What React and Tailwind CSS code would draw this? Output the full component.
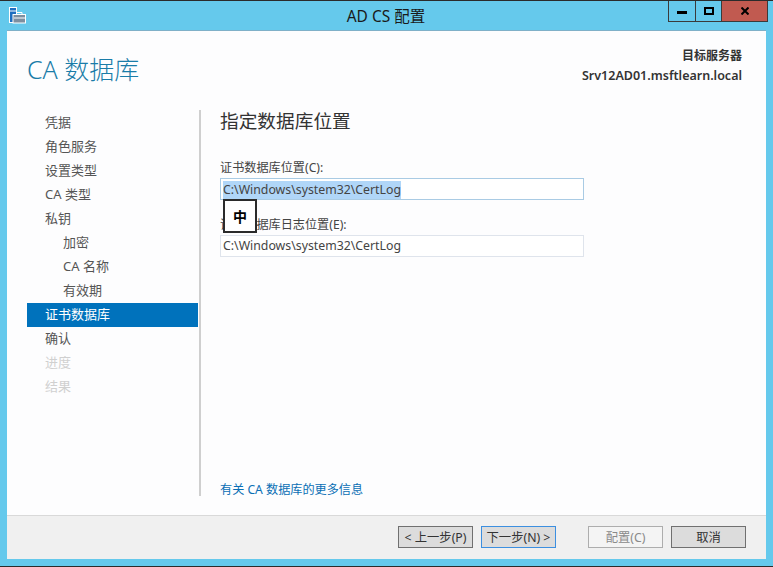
const F = "font-['Noto_Sans','Noto_Sans_CJK_SC',sans-serif]";

function Nav({ label, indent, active, disabled }) {
  return (
    <div
      className={`h-6 flex items-center text-[13px] ${indent ? "pl-[36px]" : "pl-[18px]"} ${
        active ? "bg-[#0072bc] text-white" : disabled ? "text-[#d0d0d0]" : "text-[#555555]"
      }`}
    >
      {label}
    </div>
  );
}

function Btn({ children, cls }) {
  return (
    <div className={`w-[75px] h-[22px] flex items-center justify-center text-[12.3px] pt-[2px] border ${cls}`}>{children}</div>
  );
}

export default function App() {
  return (
    <div className={`${F} relative w-[773px] h-[567px] bg-[#65c9ec] border-y border-[#2b2b2b] flex flex-col overflow-hidden`}>
      <div className="h-[30px] shrink-0 relative flex justify-center items-center">
        <svg className="absolute left-[9px] top-[6px]" width="17" height="17" viewBox="0 0 17 17">
          <rect x="0.5" y="0.5" width="7" height="15" fill="#1f6fc0" stroke="#fff" />
          <rect x="1" y="3.5" width="6" height="1" fill="#fff" />
          <rect x="4" y="7.5" width="12.5" height="8.5" fill="#7d8fa0" stroke="#fff" />
          <path d="M7.5 7.5V5.5H13V7.5" fill="none" stroke="#fff" />
          <rect x="5" y="10.5" width="11" height="1" fill="#fff" />
        </svg>
        <span className="text-[15.5px] text-[#1a1a1a] pt-[1px] pr-[1px]">AD CS 配置</span>
        <div className="absolute right-[5px] top-[-1px] h-[22px] flex border border-t-0 border-[#3a3a3a]">
          <div className="w-[27px] flex items-center justify-center border-r border-[#3a3a3a]">
            <div className="w-[10px] h-[3px] bg-black mt-[3px]" />
          </div>
          <div className="w-[26px] flex items-center justify-center border-r border-[#3a3a3a]">
            <div className="w-[10px] h-[8px] border-2 border-black" />
          </div>
          <div className="w-[45px] bg-[#c15a50] flex items-center justify-center">
            <svg width="8" height="8" viewBox="0 0 8 8">
              <path d="M0.5 0.5L7.5 7.5M7.5 0.5L0.5 7.5" stroke="#000" strokeWidth="2" />
            </svg>
          </div>
        </div>
      </div>

      <div className="mx-[7px] h-[528px] bg-[#fdfdfe] flex flex-col shadow-[0_-1px_0_#7fb0c8]">
        <div className="h-[79px] shrink-0 flex justify-between pl-[20px] pr-[24px]">
          <div className="text-[#1a7ca8] text-[25px] font-light pt-[20px] leading-[36px]">CA 数据库</div>
          <div className="text-right font-semibold text-[#333333] pt-[15px] leading-[20px]">
            <div className="text-[12px]">目标服务器</div>
            <div className="text-[12.5px]">Srv12AD01.msftlearn.local</div>
          </div>
        </div>

        <div className="flex-1 flex">
          <div className="w-[171px] ml-[20px] pt-[1px] shrink-0">
            <Nav label="凭据" />
            <Nav label="角色服务" />
            <Nav label="设置类型" />
            <Nav label="CA 类型" />
            <Nav label="私钥" />
            <Nav label="加密" indent />
            <Nav label="CA 名称" indent />
            <Nav label="有效期" indent />
            <Nav label="证书数据库" active />
            <Nav label="确认" />
            <Nav label="进度" disabled />
            <Nav label="结果" disabled />
          </div>
          <div className="w-[2px] ml-[1px] h-[386px] bg-[#cfcfcf]" />
          <div className="relative flex-1 pl-[19px] h-[386px] flex flex-col">
            <div className="text-[18.7px] leading-[24px] text-[#333333] mt-[-1px]">指定数据库位置</div>
            <div className="mt-[26px] text-[12.15px] leading-[18px] text-[#444444]">证书数据库位置(C):</div>
            <div className="mt-[1px] w-[364px] h-[22px] border border-[#a9cbe4] bg-white flex items-center px-[2px] pt-[1px] text-[12.3px] text-[#444444]">
              <span className="bg-[#b0d6f8] leading-[18px]">C:\Windows\system32\CertLog</span>
            </div>
            <div className="mt-[16px] text-[12.15px] leading-[18px] text-[#444444]">证书数据库日志位置(E):</div>
            <div className="mt-[1px] w-[364px] h-[22px] border border-[#dfe4ec] bg-white flex items-center px-[2px] pt-[1px] text-[12.3px] text-[#444444]">
              C:\Windows\system32\CertLog
            </div>
            <div className="mt-auto text-[12.15px] leading-[18px] text-[#0a6fb5] mb-[-3px]">有关 CA 数据库的更多信息</div>
            <div className="absolute left-[22px] top-[89px] w-[34px] h-[34px] bg-white border-2 border-[#2b2b2b] flex items-center justify-center text-[14px] font-bold text-black">
              中
            </div>
          </div>
        </div>

        <div className="h-[44px] shrink-0 bg-[#f0f0f0] border-t border-[#d9d9d9] flex items-center pl-[391px] pb-[1px]">
          <Btn cls="bg-[#dcdcdc] border-[#707070] text-[#333333]">&lt; 上一步(P)</Btn>
          <Btn cls="ml-[8px] bg-[#dcdcdc] border-[#3c8fe0] text-[#333333]">下一步(N) &gt;</Btn>
          <Btn cls="ml-[32px] bg-[#f4f4f4] border-[#adadad] text-[#8a8a8a]">配置(C)</Btn>
          <Btn cls="ml-[8px] bg-[#dcdcdc] border-[#707070] text-[#333333]">取消</Btn>
        </div>
      </div>
    </div>
  );
}
